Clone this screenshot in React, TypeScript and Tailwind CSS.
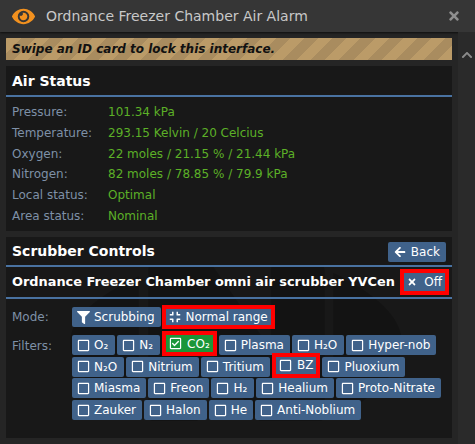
import type { ReactNode } from 'react';
import { FaArrowLeft, FaChevronUp, FaCompress, FaEye, FaFilter, FaRegCheckSquare, FaRegSquare, FaTimes } from 'react-icons/fa';

const airRows = [
  ['Pressure:', '101.34 kPa'],
  ['Temperature:', '293.15 Kelvin / 20 Celcius'],
  ['Oxygen:', '22 moles / 21.15 % / 21.44 kPa'],
  ['Nitrogen:', '82 moles / 78.85 % / 79.9 kPa'],
  ['Local status:', 'Optimal'],
  ['Area status:', 'Nominal'],
];

const filters: { name: string; on?: boolean; marked?: boolean }[] = [
  { name: 'O₂' },
  { name: 'N₂' },
  { name: 'CO₂', on: true, marked: true },
  { name: 'Plasma' },
  { name: 'H₂O' },
  { name: 'Hyper-nob' },
  { name: 'N₂O' },
  { name: 'Nitrium' },
  { name: 'Tritium' },
  { name: 'BZ', marked: true },
  { name: 'Pluoxium' },
  { name: 'Miasma' },
  { name: 'Freon' },
  { name: 'H₂' },
  { name: 'Healium' },
  { name: 'Proto-Nitrate' },
  { name: 'Zauker' },
  { name: 'Halon' },
  { name: 'He' },
  { name: 'Anti-Noblium' },
];

function Btn({ children, className = '' }: { children: ReactNode; className?: string }) {
  return (
    <span className={`inline-flex h-5 items-center rounded-[2px] bg-[#40628a] text-[12px] leading-5 whitespace-nowrap text-white ${className}`}>
      {children}
    </span>
  );
}

function Marked({ children, className = '' }: { children: ReactNode; className?: string }) {
  return (
    <span className={`inline-flex items-center gap-[5px] border-4 border-[#ff0000] px-[3px] text-[12px] whitespace-nowrap text-white ${className}`}>
      {children}
    </span>
  );
}

function FilterButton({ name, on, marked }: { name: string; on?: boolean; marked?: boolean }) {
  const icon = on ? <FaRegCheckSquare size={13} /> : <FaRegSquare size={13} />;
  if (marked) {
    return (
      <Marked className={`-mt-1 -mb-px h-[25px] ${on ? 'bg-[#1b9638]' : 'bg-[#40628a]'}`}>
        {icon}
        {name}
      </Marked>
    );
  }
  // the subscript glyph runs a pixel narrower here than in the game's font
  const padRight = name.includes('₂') ? 'pr-[7px]' : 'pr-[6px]';
  return (
    <Btn className={`gap-1 pl-[5px] ${padRight}`}>
      {icon}
      {name}
    </Btn>
  );
}

export default function App() {
  return (
    <div className="flex h-[444px] w-[475px] flex-col overflow-hidden bg-[#252525] font-['DejaVu_Sans',sans-serif] text-[12px]">
      <div className="flex h-8 shrink-0 items-center bg-[#363636] pr-[14px] pl-3 shadow-[0_1px_2px_rgba(0,0,0,0.6)]">
        <FaEye size={23} className="text-[#f2911f]" />
        <span className="ml-[11px] flex-1 text-[14px] text-[#c8c8c8]">Ordnance Freezer Chamber Air Alarm</span>
        <FaTimes size={14} className="text-[#8f8f8f]" />
      </div>
      <div className="flex min-h-0 flex-1">
        <div className="relative flex w-[458px] flex-col gap-[6px] p-[6px]">
          <svg viewBox="0 0 425 200" className="absolute top-[233px] left-[70px] w-[332px] fill-black opacity-20">
            <path d="M178 0H107a7 6 0 0 0-7 6V194a7 6 0 0 0 7 6h53a7 6 0 0 0 7-6V92l72 104a7 6 0 0 0 6 4h74a7 6 0 0 0 7-6V6a7 6 0 0 0-7-6H264a7 6 0 0 0-7 6V108L184 3a7 6 0 0 0-6-3z" />
            <path d="M88 14C35 40 0 66 0 100c0 34 35 70 88 90z" />
            <path d="M337 10c53 26 88 56 88 90 0 34-35 74-88 94z" />
          </svg>
          <div className="relative flex h-[22px] items-center bg-[repeating-linear-gradient(-45deg,#bb9b68,#bb9b68_10px,#a98c5f_10px,#a98c5f_20px)] pl-[6px] text-[12px] font-bold text-[#111] italic">
            Swipe an ID card to lock this interface.
          </div>
          <div className="relative h-[165px] bg-[rgba(0,0,0,0.33)]">
            <div className="flex h-[31px] items-center border-b-2 border-[#4972a1] pt-px pl-[6px] text-[14px] font-bold text-white">Air Status</div>
            <div className="flex flex-col px-[6px] pt-[5px]">
              {airRows.map(([label, value]) => (
                <div key={label} className="flex h-[20.7px] items-center">
                  <span className="w-[96px] text-[#7e90a7]">{label}</span>
                  <span className="text-[#5cb027]">{value}</span>
                </div>
              ))}
            </div>
          </div>
          <div className="relative flex-1 bg-[rgba(0,0,0,0.33)]">
            <div className="flex h-[30px] items-center justify-between border-b-2 border-[#4972a1] pr-[6px] pl-[6px]">
              <span className="text-[14px] font-bold text-white">Scrubber Controls</span>
              <Btn className="mt-px gap-[5px] pr-[6px] pl-[6px]">
                <FaArrowLeft size={12} />
                Back
              </Btn>
            </div>
            <div className="flex h-[32px] items-center justify-between border-b-2 border-[#4972a1] pr-[3px] pl-[6px]">
              <span className="text-[12.9px] font-bold text-white">Ordnance Freezer Chamber omni air scrubber YVCen</span>
              <Marked className="h-[26px] bg-[#40628a]">
                <FaTimes size={10} className="mr-[2px]" />
                Off
              </Marked>
            </div>
            <div className="flex h-9 items-center pl-[6px]">
              <span className="w-[60px] text-[#7e90a7]">Mode:</span>
              <Btn className="gap-1 pr-[6px] pl-[5px]">
                <FaFilter size={13} />
                Scrubbing
              </Btn>
              <Marked className="ml-px h-6 bg-[#40628a]">
                <FaCompress size={12} />
                Normal range
              </Marked>
            </div>
            <div className="flex pl-[6px]">
              <span className="w-[60px] shrink-0 pt-[2px] text-[#7e90a7]">Filters:</span>
              <div className="flex flex-1 flex-wrap gap-x-[2px] gap-y-[1.7px]">
                {filters.map((f) => (
                  <FilterButton key={f.name} name={f.name} on={f.on} marked={f.marked} />
                ))}
              </div>
            </div>
          </div>
        </div>
        <div className="flex w-[17px] justify-center bg-[#2a2a2a] pt-[17px] text-[#8a8a8a]">
          <FaChevronUp size={12} />
        </div>
      </div>
    </div>
  );
}
